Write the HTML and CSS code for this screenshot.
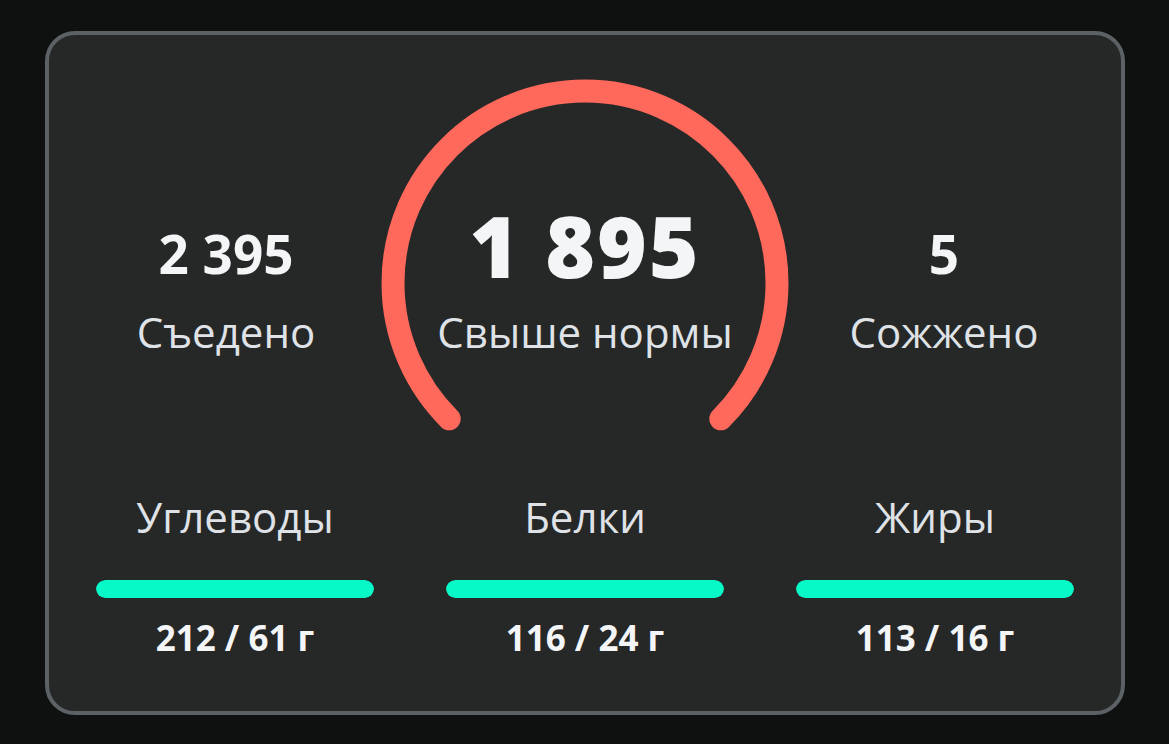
FILE: index.html
```html
<!DOCTYPE html>
<html lang="ru">

<head>
  <meta charset="UTF-8">
  <meta name="viewport" content="width=device-width, initial-scale=1.0">
  <title>Калории за день</title>
  <link rel="stylesheet" href="styles.css">
</head>

<body>
  <div class="card">
    <div class="summary">
      <div class="stat">
        <div class="stat-value">2 395</div>
        <div class="stat-label">Съедено</div>
      </div>

      <div class="gauge">
        <svg class="gauge-ring" width="420" height="370" viewBox="0 0 420 370">
          <!-- дуга 270°, от левого нижнего угла до правого -->
          <path d="M 74.2 345.8 A 192 192 0 1 1 345.8 345.8" fill="none" stroke="#fe695c" stroke-width="23" stroke-linecap="round" />
        </svg>
        <div class="gauge-text">
          <div class="gauge-value">1 895</div>
          <div class="stat-label">Свыше нормы</div>
        </div>
      </div>

      <div class="stat">
        <div class="stat-value">5</div>
        <div class="stat-label">Сожжено</div>
      </div>
    </div>

    <div class="macros">
      <div class="macro">
        <div class="macro-name">Углеводы</div>
        <div class="macro-bar"><div class="macro-fill" style="width: 100%"></div></div>
        <div class="macro-amount">212 / 61 г</div>
      </div>
      <div class="macro">
        <div class="macro-name">Белки</div>
        <div class="macro-bar"><div class="macro-fill" style="width: 100%"></div></div>
        <div class="macro-amount">116 / 24 г</div>
      </div>
      <div class="macro">
        <div class="macro-name">Жиры</div>
        <div class="macro-bar"><div class="macro-fill" style="width: 100%"></div></div>
        <div class="macro-amount">113 / 16 г</div>
      </div>
    </div>
  </div>
</body>

</html>
```

FILE: styles.css
```css
* {
  box-sizing: border-box;
}

body {
  font-family: 'Open Sans', sans-serif;
  background: #0f1111;
  margin: 0;
  padding: 31px 0 0 45px;
  color: #f4f5f7;
}

.card {
  width: 1080px;
  height: 684px;
  background: #262727;
  border: 4px solid #5b6164;
  border-radius: 30px;
  padding-top: 38px;
}

.summary {
  display: grid;
  grid-template-columns: 1fr 420px 1fr;
  padding: 0 28px;
}

.stat {
  text-align: center;
  padding-top: 151px;
}

.stat-value {
  font-size: 53px;
  font-weight: 700;
  line-height: 60px;
}

.stat-label {
  font-size: 42px;
  color: #dfe2e6;
  line-height: 50px;
  margin-top: 23px;
}

.gauge {
  display: grid;
  justify-items: center;
}

.gauge-ring,
.gauge-text {
  grid-area: 1 / 1;
}

.gauge-ring {
  display: block;
}

.gauge-text {
  text-align: center;
  padding-top: 127px;
}

.gauge-value {
  font-size: 85px;
  font-weight: 800;
  line-height: 90px;
  letter-spacing: 2px;
}

.gauge-text .stat-label {
  margin-top: 17px;
}

.macros {
  display: grid;
  grid-template-columns: repeat(3, 1fr);
  padding: 0 11px;
  margin-top: 49px;
}

.macro {
  text-align: center;
}

.macro-name {
  font-size: 42px;
  color: #dfe2e6;
  line-height: 50px;
}

.macro-bar {
  height: 18px;
  margin: 38px 36px 0;
  border-radius: 9px;
  background: #3a3d3e;
  overflow: hidden;
}

.macro-fill {
  height: 100%;
  background: #06f9c6;
  border-radius: 9px;
}

.macro-amount {
  font-size: 35px;
  font-weight: 700;
  line-height: 42px;
  margin-top: 19px;
}
```
